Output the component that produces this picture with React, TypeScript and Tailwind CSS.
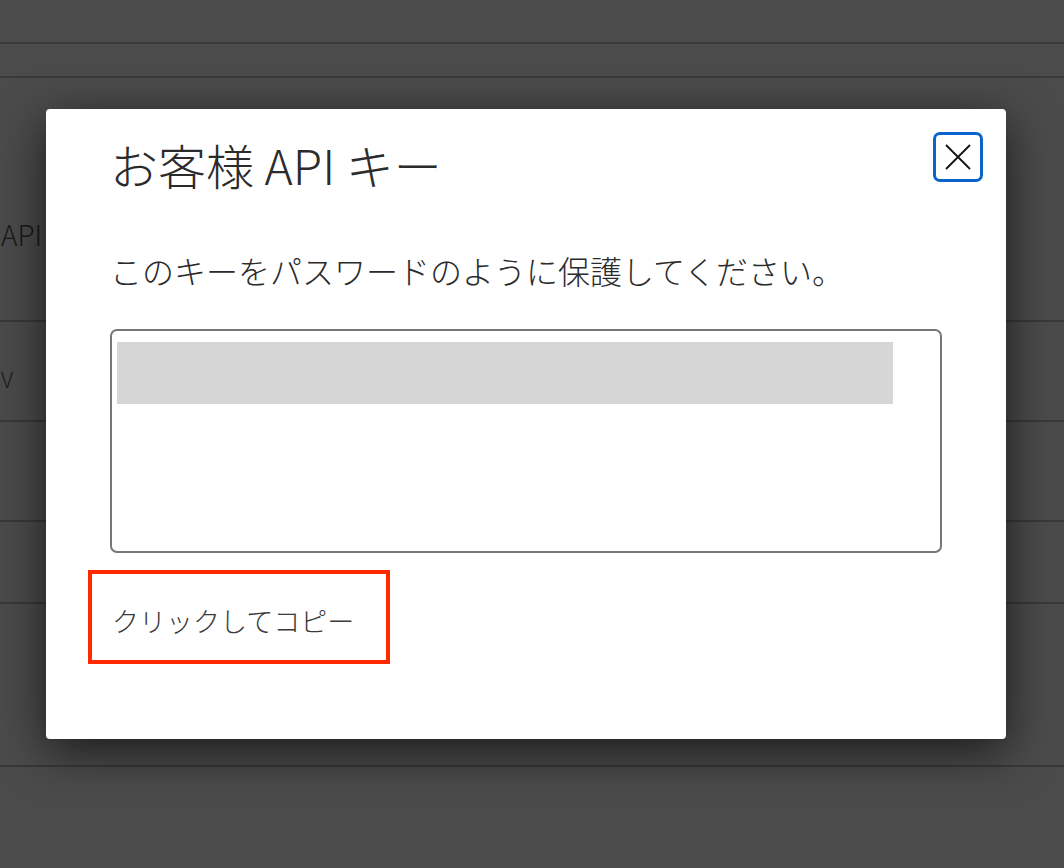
import React from 'react'

const jp = { fontFamily: '"Noto Sans CJK JP", "Noto Sans", sans-serif' }

export default function App() {
  return (
    <div className="relative w-[1064px] h-[868px] overflow-hidden bg-[#4b4b4b]" style={jp}>
      {/* Page behind the overlay */}
      <div className="flex flex-col">
        <div className="h-[44px] border-b-2 border-[#393939]" />
        <div className="h-[34px] border-b-2 border-[#393939]" />
        <div className="h-[244px] border-b-2 border-[#393939] flex items-end pb-[72px]">
          <span className="ml-[1px] text-[28px] leading-none font-light text-[#1a1a1a]">API</span>
        </div>
        <div className="h-[100px] border-b-2 border-[#393939] flex items-center pt-[14px]">
          <span className="ml-[1px] text-[22px] leading-none font-light text-[#1a1a1a]">V</span>
        </div>
        <div className="h-[100px] border-b-2 border-[#393939]" />
        <div className="h-[82px] border-b-2 border-[#393939]" />
        <div className="h-[163px] border-b-2 border-[#393939]" />
      </div>

      {/* Dialog */}
      <div className="absolute left-[46px] top-[109px] w-[960px] h-[630px] bg-white rounded-[4px] shadow-[0_12px_48px_rgba(0,0,0,0.65)] px-16 pt-[27px]">
        <button className="absolute right-[23px] top-[23px] w-[50px] h-[50px] border-[3px] border-[#0964cc] rounded-[7px] flex items-center justify-center bg-white">
          <svg width="26" height="26" viewBox="0 0 26 26" fill="none" stroke="#111" strokeWidth="1.8">
            <path d="M1 1 L25 25 M25 1 L1 25" />
          </svg>
        </button>

        <h2 className="text-[48px] leading-[57px] text-[#2b2b2b] font-light">お客様 API キー</h2>

        <p className="mt-[56px] text-[32px] leading-[42px] text-[#2b2b2b] font-light">
          このキーをパスワードのように保護してください。
        </p>

        <div className="mt-[38px] h-[224px] border-2 border-[#777] rounded-[7px] pt-[11px] pl-[5px]">
          <div className="w-[776px] h-[62px] bg-[#d6d6d6]" />
        </div>

        <button className="mt-[17px] ml-[-22px] w-[302px] h-[94px] border-4 border-[#ff2a00] flex items-center pt-[8px] pl-[20px] text-[27px] text-[#3a3a3a] font-light bg-white">
          クリックしてコピー
        </button>
      </div>
    </div>
  )
}
